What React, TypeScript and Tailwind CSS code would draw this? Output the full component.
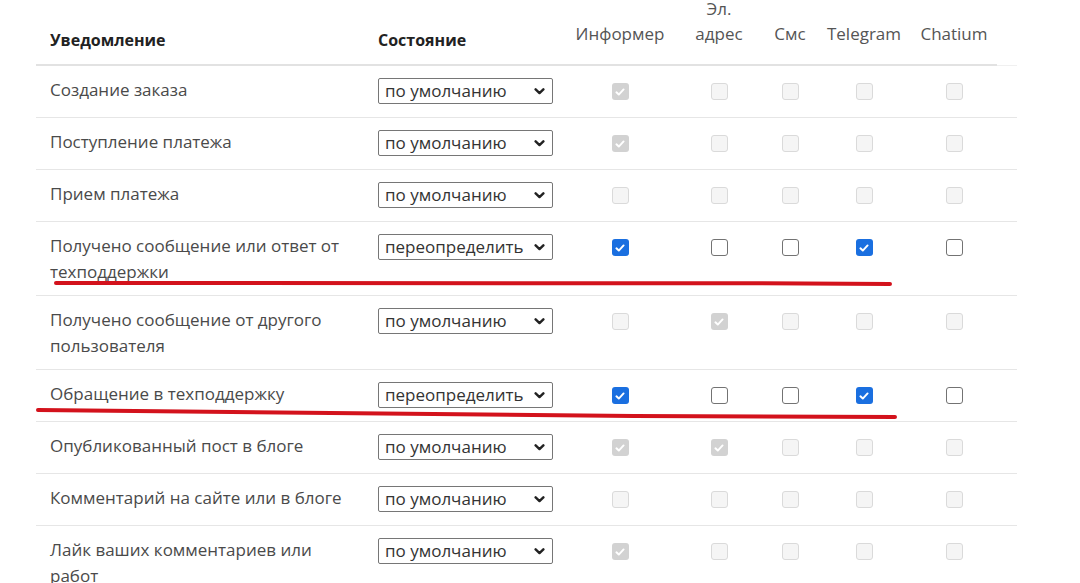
import React from 'react';

type Box = 'on' | 'off' | 'dis' | 'dison';

interface Row {
  title: string;
  mode: 'по умолчанию' | 'переопределить';
  boxes: Box[];
}

const rows: Row[] = [
  { title: 'Создание заказа', mode: 'по умолчанию', boxes: ['dison', 'dis', 'dis', 'dis', 'dis'] },
  { title: 'Поступление платежа', mode: 'по умолчанию', boxes: ['dison', 'dis', 'dis', 'dis', 'dis'] },
  { title: 'Прием платежа', mode: 'по умолчанию', boxes: ['dis', 'dis', 'dis', 'dis', 'dis'] },
  { title: 'Получено сообщение или ответ от техподдержки', mode: 'переопределить', boxes: ['on', 'off', 'off', 'on', 'off'] },
  { title: 'Получено сообщение от другого пользователя', mode: 'по умолчанию', boxes: ['dis', 'dison', 'dis', 'dis', 'dis'] },
  { title: 'Обращение в техподдержку', mode: 'переопределить', boxes: ['on', 'off', 'off', 'on', 'off'] },
  { title: 'Опубликованный пост в блоге', mode: 'по умолчанию', boxes: ['dison', 'dison', 'dis', 'dis', 'dis'] },
  { title: 'Комментарий на сайте или в блоге', mode: 'по умолчанию', boxes: ['dis', 'dis', 'dis', 'dis', 'dis'] },
  { title: 'Лайк ваших комментариев или работ', mode: 'по умолчанию', boxes: ['dison', 'dis', 'dis', 'dis', 'dis'] },
];

// small check mark used inside the boxes
const Tick = () => (
  <svg viewBox="0 0 16 16" className="w-[12px] h-[12px]">
    <path d="M3.2 8.4 L6.4 11.4 L12.8 4.6" fill="none" stroke="white" strokeWidth="2.6" strokeLinecap="round" strokeLinejoin="round" />
  </svg>
);

const CheckBox = ({ kind }: { kind: Box }) => {
  if (kind === 'on') {
    return (
      <span className="inline-flex items-center justify-center w-[17px] h-[17px] rounded-[3px] bg-[#1a6fe0]">
        <Tick />
      </span>
    );
  }
  if (kind === 'dison') {
    return (
      <span className="inline-flex items-center justify-center w-[17px] h-[17px] rounded-[3px] bg-[#d2d2d2]">
        <Tick />
      </span>
    );
  }
  if (kind === 'off') {
    return <span className="inline-block w-[17px] h-[17px] rounded-[3px] border-[1.5px] border-[#737373] bg-white" />;
  }
  return <span className="inline-block w-[17px] h-[17px] rounded-[3px] border border-[#dadada] bg-[#f5f5f5]" />;
};

const Chevron = () => (
  <svg viewBox="0 0 12 8" className="w-[11px] h-[7px]">
    <path d="M1.6 1.6 L6 5.8 L10.4 1.6" fill="none" stroke="#222" strokeWidth="2.8" strokeLinecap="round" strokeLinejoin="round" />
  </svg>
);

const StateSelect = ({ value }: { value: string }) => (
  <div className="flex items-center justify-between w-[175px] h-[26px] border border-[#767676] rounded-[2px] bg-white pl-[6px] pr-[7px] text-[17px] leading-[24px] text-[#333]">
    <span>{value}</span>
    <Chevron />
  </div>
);

export default function App() {
  return (
    <div className="relative w-[1080px] h-[583px] overflow-hidden bg-white font-['Open_Sans',sans-serif]">
      {/* the screenshot is cropped a few pixels into the header */}
      <table className="-mt-[4px] ml-[36px] table-fixed border-collapse w-[981px]">
        <colgroup>
          <col className="w-[328px]" />
          <col className="w-[201px]" />
          <col className="w-[110px]" />
          <col className="w-[88px]" />
          <col className="w-[54px]" />
          <col className="w-[94px]" />
          <col className="w-[86px]" />
          <col className="w-[20px]" />
        </colgroup>
        <thead>
          <tr className="align-bottom">
            <th className="border-b-2 border-[#e2e2e2] pl-[14px] pb-[11px] text-left text-[16px] leading-[26px] font-bold text-[#222]">Уведомление</th>
            <th className="border-b-2 border-[#e2e2e2] pl-[14px] pb-[11px] text-left text-[16px] leading-[26px] font-bold text-[#222]">Состояние</th>
            <th className="border-b-2 border-[#e2e2e2] pb-[18px] text-center text-[17px] leading-[25px] font-normal text-[#555]">Информер</th>
            <th className="border-b-2 border-[#e2e2e2] pb-[18px] text-center text-[17px] leading-[25px] font-normal text-[#555]">
              Эл.<br />адрес
            </th>
            <th className="border-b-2 border-[#e2e2e2] pb-[18px] text-center text-[17px] leading-[25px] font-normal text-[#555]">Смс</th>
            <th className="border-b-2 border-[#e2e2e2] pb-[18px] text-center text-[17px] leading-[25px] font-normal text-[#555]">Telegram</th>
            <th className="border-b-2 border-[#e2e2e2] pb-[18px] text-center text-[17px] leading-[25px] font-normal text-[#555]">Chatium</th>
            <th className="border-b border-[#f0f0f0]" />
          </tr>
        </thead>
        <tbody>
          {rows.map((row) => (
            <tr key={row.title} className="align-top border-b border-[#e6e6e6]">
              <td className="pl-[14px] pr-[14px] pt-[11px] pb-[10px] text-[17px] leading-[26px] text-[#4a4a4a]">{row.title}</td>
              <td className="pl-[14px] pt-[12px] pb-[13px]">
                <StateSelect value={row.mode} />
              </td>
              {row.boxes.map((b, i) => (
                <td key={i} className="pt-[17px] text-center leading-none">
                  <CheckBox kind={b} />
                </td>
              ))}
              <td />
            </tr>
          ))}
        </tbody>
      </table>

      {/* red marker strokes drawn over the screenshot */}
      <svg className="absolute inset-0 pointer-events-none" width="1080" height="583">
        <path d="M56 283 C 300 282, 600 282, 890 284" fill="none" stroke="#d3121c" strokeWidth="4" strokeLinecap="round" />
        <path d="M38 410 C 250 412, 600 417, 895 417" fill="none" stroke="#d3121c" strokeWidth="4" strokeLinecap="round" />
      </svg>
    </div>
  );
}
